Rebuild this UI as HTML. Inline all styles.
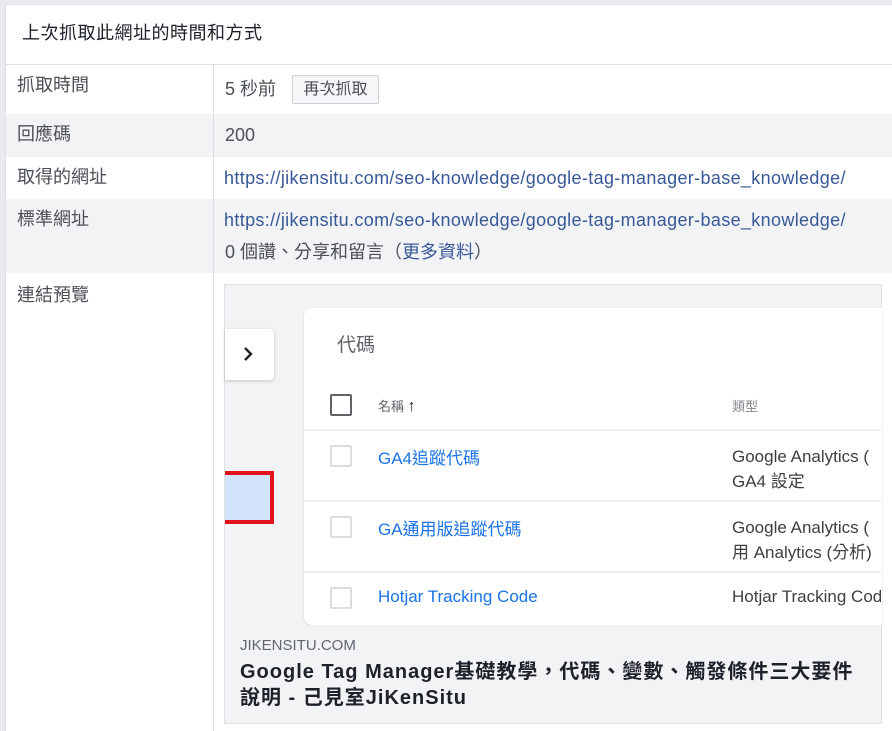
<!DOCTYPE html>
<html><head><meta charset="utf-8"><style>
*{margin:0;padding:0;box-sizing:border-box}
body{width:892px;height:731px;overflow:hidden;background:#e9ebee;font-family:"Liberation Sans","Noto Sans CJK TC",sans-serif;color:#4b4f56;position:relative}
.a{position:absolute;white-space:nowrap}
#box{position:absolute;left:5px;top:4px;width:887px;height:727px;background:#fff;border-left:1px solid #dddfe2;border-top:1px solid #dddfe2}
.row{position:absolute;left:6px;width:886px}
.g{background:#f2f3f5}
.lnk{color:#385898}
.t{font-size:18px;line-height:22px}
.u{letter-spacing:0.35px}
.gm{font-family:"Liberation Sans","Noto Sans CJK TC",sans-serif}
.cb{position:absolute;width:22px;height:22px;border:2px solid #dadce0;border-radius:2px}
.hl{position:absolute;left:304px;width:577px;height:2px;background:#eceff1}
</style></head><body>
<div id="box"></div>
<div class="a" style="left:6px;top:64px;width:886px;height:1px;background:#dddfe2"></div>
<div class="a t" style="left:22px;top:22px;color:#1d2129;letter-spacing:0.5px">上次抓取此網址的時間和方式</div>
<div class="row g" style="top:114px;height:43px"></div>
<div class="row g" style="top:199px;height:74px"></div>
<div class="a" style="left:213px;top:65px;width:1px;height:666px;background:#dddfe2"></div>
<div class="a t" style="left:17px;top:74px">抓取時間</div>
<div class="a t" style="left:225px;top:78px">5 秒前</div>
<div class="a" style="left:292px;top:75px;width:87px;height:29px;background:#f5f6f7;border:1px solid #ccd0d5;border-radius:2px;font-size:16px;line-height:27px;text-align:center;color:#4b4f56">再次抓取</div>
<div class="a t" style="left:17px;top:123px">回應碼</div>
<div class="a t" style="left:225px;top:124px">200</div>
<div class="a t" style="left:17px;top:166px">取得的網址</div>
<div class="a t lnk u" style="left:224px;top:167px">https://jikensitu.com/seo-knowledge/google-tag-manager-base_knowledge/</div>
<div class="a t" style="left:17px;top:208px">標準網址</div>
<div class="a t lnk u" style="left:224px;top:209px">https://jikensitu.com/seo-knowledge/google-tag-manager-base_knowledge/</div>
<div class="a t" style="left:225px;top:241px">0 個讚、分享和留言（<span class="lnk">更多資料</span>）</div>
<div class="a t" style="left:17px;top:284px">連結預覽</div>
<div class="a" style="left:224px;top:284px;width:658px;height:440px;border:1px solid #dddfe2;background:#f1f3f4;overflow:hidden"></div>
<div class="a" style="left:225px;top:329px;width:49px;height:51px;background:#fff;border-radius:0 4px 4px 0;box-shadow:0 1px 3px rgba(0,0,0,.2)"></div>
<svg class="a" style="left:241px;top:346px" width="14" height="16"><path d="M4 2 L10 8 L4 14" stroke="#202124" stroke-width="2.4" fill="none"/></svg>
<div class="a" style="left:225px;top:471px;width:49px;height:53px;background:#d2e3fc;border:4px solid #e2131c;border-left:none"></div>
<div class="a" style="left:304px;top:308px;width:578px;height:317px;background:#fff;border-radius:8px 0 0 8px;box-shadow:0 1px 2px rgba(0,0,0,.15)"></div>
<div class="a gm" style="left:337px;top:330px;font-size:19px;color:#5f6368">代碼</div>
<div class="cb" style="left:330px;top:394px;border-color:#5f6368"></div>
<div class="a gm" style="left:378px;top:396px;font-size:13px;color:#5f6368">名稱 <b style="font-size:16px;color:#202124">↑</b></div>
<div class="a gm" style="left:732px;top:396px;font-size:13px;color:#80868b">類型</div>
<div class="hl" style="top:429px"></div>
<div class="hl" style="top:500px"></div>
<div class="hl" style="top:571px"></div>
<div class="cb" style="left:330px;top:445px"></div>
<div class="cb" style="left:330px;top:516px"></div>
<div class="cb" style="left:330px;top:587px"></div>
<div class="a gm" style="left:378px;top:444px;font-size:17px;color:#1a73e8">GA4追蹤代碼</div>
<div class="a gm" style="left:378px;top:515px;font-size:17px;color:#1a73e8">GA通用版追蹤代碼</div>
<div class="a gm" style="left:378px;top:587px;font-size:17px;color:#1a73e8">Hotjar Tracking Code</div>
<div class="a gm" style="left:732px;top:444px;font-size:17px;color:#3c4043;width:149px;overflow:hidden;line-height:25px">Google Analytics (<br>GA4 設定</div>
<div class="a gm" style="left:732px;top:515px;font-size:17px;color:#3c4043;width:149px;overflow:hidden;line-height:25px">Google Analytics (<br>用 Analytics (分析)</div>
<div class="a gm" style="left:732px;top:587px;font-size:17px;color:#3c4043;width:149px;overflow:hidden">Hotjar Tracking Code</div>
<div class="a" style="left:224px;top:625px;width:658px;height:99px;background:#f2f3f5;border:1px solid #dddfe2;border-top:none"></div>
<div class="a" style="left:240px;top:637px;font-size:15px;color:#606770">JIKENSITU.COM</div>
<div class="a" style="left:240px;top:659px;font-size:20px;line-height:26px;font-weight:bold;color:#1d2129;letter-spacing:1px">Google Tag Manager基礎教學，代碼、變數、觸發條件三大要件<br>說明 - 己見室JiKenSitu</div>
</body></html>
